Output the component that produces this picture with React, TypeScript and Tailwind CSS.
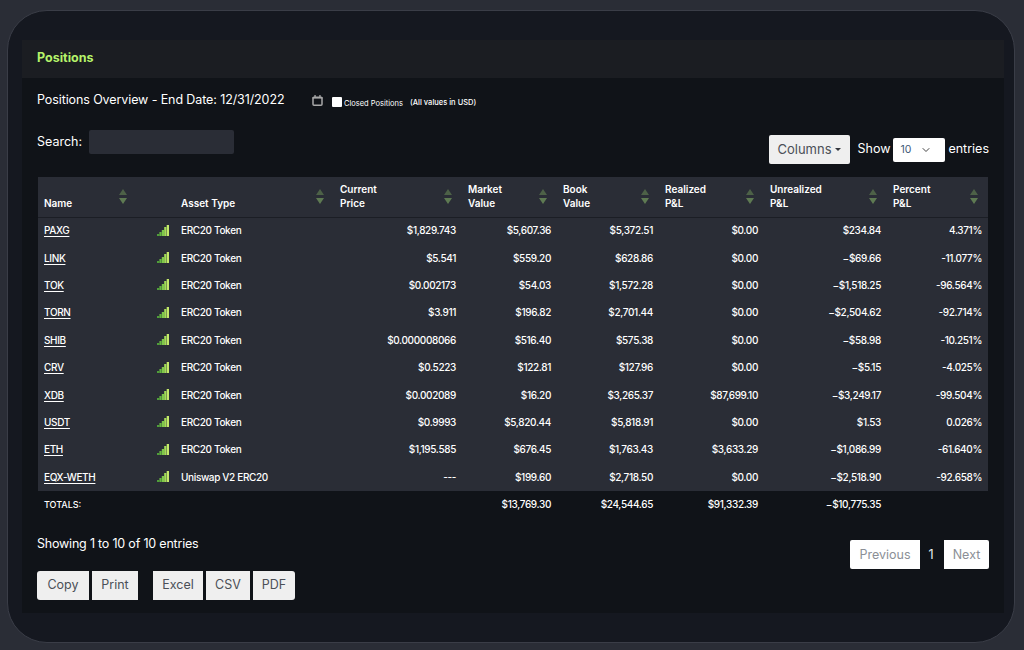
import { ChevronDown } from "lucide-react";

const rows = [
  ["PAXG", "ERC20 Token", "$1,829.743", "$5,607.36", "$5,372.51", "$0.00", "$234.84", "4.371%"],
  ["LINK", "ERC20 Token", "$5.541", "$559.20", "$628.86", "$0.00", "−$69.66", "-11.077%"],
  ["TOK", "ERC20 Token", "$0.002173", "$54.03", "$1,572.28", "$0.00", "−$1,518.25", "-96.564%"],
  ["TORN", "ERC20 Token", "$3.911", "$196.82", "$2,701.44", "$0.00", "−$2,504.62", "-92.714%"],
  ["SHIB", "ERC20 Token", "$0.000008066", "$516.40", "$575.38", "$0.00", "−$58.98", "-10.251%"],
  ["CRV", "ERC20 Token", "$0.5223", "$122.81", "$127.96", "$0.00", "−$5.15", "-4.025%"],
  ["XDB", "ERC20 Token", "$0.002089", "$16.20", "$3,265.37", "$87,699.10", "−$3,249.17", "-99.504%"],
  ["USDT", "ERC20 Token", "$0.9993", "$5,820.44", "$5,818.91", "$0.00", "$1.53", "0.026%"],
  ["ETH", "ERC20 Token", "$1,195.585", "$676.45", "$1,763.43", "$3,633.29", "−$1,086.99", "-61.640%"],
  ["EQX-WETH", "Uniswap V2 ERC20", "---", "$199.60", "$2,718.50", "$0.00", "−$2,518.90", "-92.658%"],
];

const SortArrows = () => (
  <svg width="8" height="15" viewBox="0 0 8 15" className="absolute right-[10px] top-[12px]">
    <path d="M4 0 L8 6 L0 6 Z" fill="#4d6147" />
    <path d="M0 9 L8 9 L4 15 Z" fill="#5e7a52" />
  </svg>
);

const SignalIcon = () => (
  <svg width="12" height="11" viewBox="0 0 12 11" className="ml-auto mt-[-1px]">
    <rect x="0" y="9" width="2.2" height="2" fill="#4f9e3a" />
    <rect x="2.4" y="7" width="2.2" height="4" fill="#66b640" />
    <rect x="4.8" y="5" width="2.2" height="6" fill="#7fc94a" />
    <rect x="7.2" y="2" width="2.2" height="9" fill="#a3dc58" />
    <rect x="9.7" y="0" width="2.3" height="11" fill="#c4e96a" />
  </svg>
);

const CalendarIcon = () => (
  <svg width="11" height="11" viewBox="0 0 11 11" className="mt-[1px]">
    <rect x="1" y="2.2" width="9" height="8" rx="1" fill="none" stroke="#a8a8a8" strokeWidth="1.5" />
    <rect x="0.5" y="2" width="10" height="1.6" fill="#a8a8a8" />
    <rect x="2.4" y="0" width="1.3" height="2" fill="#a8a8a8" />
    <rect x="7.3" y="0" width="1.3" height="2" fill="#a8a8a8" />
  </svg>
);

const Th = ({ lines }: { lines: string[] }) => (
  <th className="relative px-[6px] pb-[7px] align-bottom text-left font-semibold leading-[14px]">
    {lines.map((l) => (
      <div key={l}>{l}</div>
    ))}
    <SortArrows />
  </th>
);

const grayBtn = "h-[29px] bg-[#efefef] text-[12.5px] text-[#4b4f57]";

export default function App() {
  return (
    <div className="h-[650px] w-[1024px] overflow-hidden bg-[#2a2d36] pl-[7px] pt-[10px] font-['Inter',sans-serif] text-white">
      <div className="h-[633px] w-[1008px] rounded-[40px] border border-[#3a3d47] bg-[#151820] px-[14px] pt-[29px]">
        <div className="h-[573px] w-[982px] bg-[#101318]">
          <div className="flex h-[38px] items-center bg-[#1b1d22] px-[15px] pb-[2px] text-[12.5px] font-bold text-[#b6f36a]">
            Positions
          </div>

          <div className="px-[15px]">
            <div className="flex h-[44px] items-center">
              <span className="w-[275px] text-[12.5px] tracking-[-0.1px]">Positions Overview - End Date: 12/31/2022</span>
              <CalendarIcon />
              <input type="checkbox" className="ml-[9px] mt-[4px] h-[10px] w-[10px] appearance-none rounded-[1px] bg-white" />
              <span className="ml-[2px] mt-[8px] w-[66px] text-[7.5px]">Closed Positions</span>
              <span className="mt-[6px] text-[7.5px] font-medium">(All values in USD)</span>
            </div>

            <div className="flex h-[55px] items-start justify-between">
              <div className="mt-[8px] flex items-center gap-[7px] text-[12.5px]">
                <span>Search:</span>
                <div className="h-[24px] w-[145px] rounded-[2px] bg-[#2a2d36]" />
              </div>
              <div className="mt-[13px] flex items-center">
                <button className="mr-[8px] flex h-[29px] w-[81px] items-center justify-center gap-[3px] rounded-[2px] bg-[#efefef] text-[13px] text-[#4b4f57]">
                  Columns
                  <span className="h-0 w-0 border-x-[3px] border-t-[3px] border-x-transparent border-t-[#33363d]" />
                </button>
                <span className="mr-[3px] text-[12.5px]">Show</span>
                <div className="mr-[3px] flex h-[24px] w-[52px] items-center justify-between rounded-[2px] bg-white pl-[7px] pr-[13px] text-[10.5px] text-[#3f5a78]">
                  10
                  <ChevronDown size={12} className="text-[#444]" />
                </div>
                <span className="text-[12.5px]">entries</span>
              </div>
            </div>

            <table className="ml-[1px] w-[950px] table-fixed border-collapse text-[10px]">
              <colgroup>
                <col className="w-[99px]" />
                <col className="w-[38px]" />
                <col className="w-[159px]" />
                <col className="w-[128px]" />
                <col className="w-[95px]" />
                <col className="w-[102px]" />
                <col className="w-[105px]" />
                <col className="w-[123px]" />
                <col className="w-[101px]" />
              </colgroup>
              <thead>
                <tr className="h-[40px] border-b border-[#1b1e25] bg-[#2a2d36]">
                  <Th lines={["Name"]} />
                  <th />
                  <Th lines={["Asset Type"]} />
                  <Th lines={["Current", "Price"]} />
                  <Th lines={["Market", "Value"]} />
                  <Th lines={["Book", "Value"]} />
                  <Th lines={["Realized", "P&L"]} />
                  <Th lines={["Unrealized", "P&L"]} />
                  <Th lines={["Percent", "P&L"]} />
                </tr>
              </thead>
              <tbody className="bg-[#2a2d36] font-medium tracking-[-0.35px]">
                {rows.map((r) => (
                  <tr key={r[0]} className="h-[27.4px]">
                    <td className="px-[6px]">
                      <a className="underline underline-offset-2">{r[0]}</a>
                    </td>
                    <td className="px-[6px]">
                      <div className="flex">
                        <SignalIcon />
                      </div>
                    </td>
                    <td className="px-[6px]">{r[1]}</td>
                    {r.slice(2).map((v, i) => (
                      <td key={i} className="px-[6px] text-right">
                        {v}
                      </td>
                    ))}
                  </tr>
                ))}
              </tbody>
              <tfoot className="font-medium tracking-[-0.35px]">
                <tr className="h-[27px]">
                  <td colSpan={3} className="px-[6px] text-[9px] tracking-normal">
                    TOTALS:
                  </td>
                  <td />
                  <td className="px-[6px] text-right">$13,769.30</td>
                  <td className="px-[6px] text-right">$24,544.65</td>
                  <td className="px-[6px] text-right">$91,332.39</td>
                  <td className="px-[6px] text-right">−$10,775.35</td>
                  <td />
                </tr>
              </tfoot>
            </table>

            <div className="mt-[22px] flex items-start justify-between">
              <div>
                <div className="mt-[-6px] text-[12.5px] leading-[20px] tracking-[-0.2px]">Showing 1 to 10 of 10 entries</div>
                <div className="mt-[17px] flex">
                  <button className={`${grayBtn} w-[52px] rounded-l-[3px]`}>Copy</button>
                  <button className={`${grayBtn} ml-[3px] w-[46px]`}>Print</button>
                  <button className={`${grayBtn} ml-[15px] w-[50px]`}>Excel</button>
                  <button className={`${grayBtn} ml-[3px] w-[44px]`}>CSV</button>
                  <button className={`${grayBtn} ml-[3px] w-[42px] rounded-r-[3px]`}>PDF</button>
                </div>
              </div>
              <div className="flex h-[29px] items-center text-[12.5px]">
                <button className="h-[29px] w-[70px] rounded-l-[2px] bg-white pt-[1px] text-[#8b8f96]">Previous</button>
                <span className="w-[24px] pr-[2px] pt-[1px] text-center text-[#e8eef0]">1</span>
                <button className="h-[29px] w-[45px] rounded-r-[2px] bg-white pt-[1px] text-[#8b8f96]">Next</button>
              </div>
            </div>
          </div>
        </div>
      </div>
    </div>
  );
}
